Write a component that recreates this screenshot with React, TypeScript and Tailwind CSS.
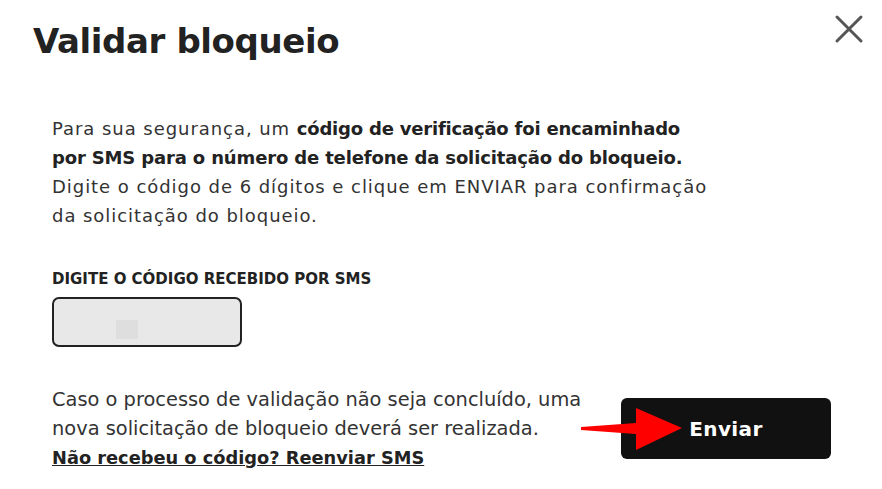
export default function App() {
	return (
		<div className="w-[882px] h-[489px] bg-white overflow-hidden text-[#333]" style={{ fontFamily: '"DejaVu Sans", sans-serif' }}>
			<div className="flex items-start justify-between pl-[33px] pr-[18px] pt-[15px]">
				<h1 className="text-[34px] leading-[52px] font-bold text-[#222] tracking-[-0.4px]">Validar bloqueio</h1>
				<button className="mt-[-1px] text-[#555]" aria-label="Fechar">
					<svg width="30" height="30" viewBox="0 0 30 30">
						<path d="M3 3 L27 27 M27 3 L3 27" stroke="#555" strokeWidth="3" strokeLinecap="round" />
					</svg>
				</button>
			</div>

			<div className="pl-[52px] pt-[47px]">
				<p className="text-[18px] leading-[29px] text-[#333] tracking-[0.95px] w-[720px]">
					Para sua segurança, um <span className="font-semibold text-[#222] tracking-[-0.2px]">código de verificação foi encaminhado</span>
					<br />
					<span className="font-semibold text-[#222] tracking-[-0.15px]">por SMS para o número de telefone da solicitação do bloqueio.</span>
					<br />
					Digite o código de 6 dígitos e clique em ENVIAR para confirmação
					<br />
					da solicitação do bloqueio.
				</p>

				<div className="mt-[38px] text-[15px] font-bold text-[#222]">DIGITE O CÓDIGO RECEBIDO POR SMS</div>
				<div className="mt-[6px] w-[190px] h-[50px] rounded-[7px] border-2 border-[#222] bg-[#e8e8e8] flex items-start">
					<div className="ml-[62px] mt-[21px] w-[22px] h-[19px] bg-[#dedede]" />
				</div>

				<div className="flex items-center mt-[38px]">
					<div className="w-[560px] text-[19.4px] leading-[29px] text-[#333]">
						<p>Caso o processo de validação não seja concluído, uma</p>
						<p>nova solicitação de bloqueio deverá ser realizada.</p>
						<a href="#" className="underline font-bold text-[17.8px] text-[#222]">Não recebeu o código? Reenviar SMS</a>
					</div>
					<div className="relative ml-[9px] mt-[1px]">
						<button className="w-[210px] h-[61px] rounded-[6px] bg-[#111] text-white text-[20px] font-bold tracking-[0.4px]">
							Enviar
						</button>
						<svg className="absolute left-[-40px] top-[10px]" width="104" height="42" viewBox="0 0 104 42">
							<polygon points="0,19 55,15 55,0 101,20 55,42 55,26 0,22" fill="#f00" />
						</svg>
					</div>
				</div>
			</div>
		</div>
	);
}
